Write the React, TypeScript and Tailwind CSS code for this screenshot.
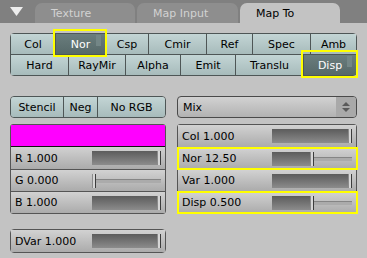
import React from "react";

type Btn = { label: string; w: string; active?: boolean; mark?: boolean };

const row1: Btn[] = [
    { label: "Col", w: "w-[44px]" },
    { label: "Nor", w: "w-[50px]", active: true, mark: true },
    { label: "Csp", w: "w-[43px]" },
    { label: "Cmir", w: "w-[58px]" },
    { label: "Ref", w: "w-[46px]" },
    { label: "Spec", w: "w-[58px]" },
    { label: "Amb", w: "flex-1" },
];

const row2: Btn[] = [
    { label: "Hard", w: "w-[57px]" },
    { label: "RayMir", w: "w-[57px]" },
    { label: "Alpha", w: "w-[55px]" },
    { label: "Emit", w: "w-[55px]" },
    { label: "Translu", w: "w-[68px]" },
    { label: "Disp", w: "flex-1", active: true, mark: true },
];

// teal toggle button, one cell of a button block
const Toggle: React.FC<{ b: Btn; first: boolean }> = ({ b, first }) => (
    <div
        className={`relative flex items-center justify-center h-full ${b.w} ${first ? "" : "border-l border-[#4e5656]"} ${
            b.active
                ? "bg-gradient-to-b from-[#6a7d7d] to-[#566969] text-white"
                : "bg-gradient-to-b from-[#c3d5d5] to-[#a7bbbb] text-black"
        }`}
    >
        {b.label}
        {b.active && <span className="absolute right-[4px] top-[1px] h-[11px] w-[5px] bg-[#738686]" />}
        {b.mark && (
            <span className="absolute z-10 -left-[3px] -right-[2px] -top-[5px] -bottom-[3px] border-2 border-[#ffff00]" />
        )}
    </div>
);

type Num = { label: string; frac: number; mark?: boolean };

// Blender number slider: label on the left, bar on the right
const Slider: React.FC<{ n: Num; top?: boolean }> = ({ n, top }) => (
    <div
        className={`relative flex items-center h-[22px] pl-[4px] pr-[4px] bg-gradient-to-b from-[#d2d2d2] to-[#ababab] ${
            top ? "" : "border-t border-[#555]"
        }`}
    >
        <span className="flex-1">{n.label}</span>
        <div className="flex items-center w-[47%] h-[14px]">
            <div
                className="h-full bg-gradient-to-b from-[#5c5c5c] to-[#8c8c8c]"
                style={{ flex: `0 0 calc((100% - 4px) * ${n.frac})` }}
            />
            <div className="h-full w-[4px] bg-[#d6d6d6] border-l border-[#8a8a8a] border-r border-r-[#3c3c3c]" />
            {n.frac < 1 && <div className="flex-1 h-[4px] bg-[#ababab] border-t border-[#858585]" />}
        </div>
        {n.mark && (
            <span className="absolute z-10 -left-[1px] -right-[2px] -top-[1px] -bottom-[1px] border-2 border-[#ffff00]" />
        )}
    </div>
);

const tabs = [
    { label: "Texture", active: false, w: "w-[100px]" },
    { label: "Map Input", active: false, w: "w-[101px]" },
    { label: "Map To", active: true, w: "w-[100px]" },
];

export default function App() {
    return (
        <div className="w-[367px] h-[258px] bg-[#c3c3c3] font-['DejaVu_Sans',sans-serif] text-[11px] leading-none text-black overflow-hidden">
            {/* tab header */}
            <div className="flex items-end h-[23px] bg-[#808080]">
                <svg width="13" height="10" viewBox="0 0 13 10" className="ml-[10px] mr-[12px] mb-[6px]">
                    <path d="M0 0 H13 L6.5 9 Z" fill="#ededed" />
                </svg>
                <div className="flex items-end gap-[2px]">
                    {tabs.map(t => (
                        <div
                            key={t.label}
                            className={`flex items-center h-[20px] pl-[16px] rounded-t-[7px] text-[11px] ${t.w} ${
                                t.active ? "bg-[#c3c3c3] text-black" : "bg-[#8e8e8e] text-[#d2d2d2]"
                            }`}
                        >
                            {t.label}
                        </div>
                    ))}
                </div>
            </div>

            {/* channel toggles */}
            <div className="ml-[10px] mt-[10px] w-[347px] border border-[#4e5656] rounded-[4px]">
                <div className="flex h-[20px]">
                    {row1.map((b, i) => (
                        <Toggle key={b.label} b={b} first={i === 0} />
                    ))}
                </div>
                <div className="flex h-[21px] border-t border-[#4e5656]">
                    {row2.map((b, i) => (
                        <Toggle key={b.label} b={b} first={i === 0} />
                    ))}
                </div>
            </div>

            <div className="flex gap-[11px] ml-[10px] mt-[20px]">
                {/* left column */}
                <div className="w-[156px] flex flex-col">
                    <div className="flex h-[22px] border border-[#4e5656] rounded-[4px] overflow-hidden">
                        <Toggle b={{ label: "Stencil", w: "w-[52px]" }} first />
                        <Toggle b={{ label: "Neg", w: "w-[34px]" }} first={false} />
                        <Toggle b={{ label: "No RGB", w: "flex-1" }} first={false} />
                    </div>
                    <div className="mt-[6px] border border-[#555] rounded-[3px]">
                        <div className="h-[22px] bg-[#ff00ff] border-b border-[#111]" />
                        <Slider n={{ label: "R 1.000", frac: 1 }} top />
                        <Slider n={{ label: "G 0.000", frac: 0 }} />
                        <Slider n={{ label: "B 1.000", frac: 1 }} />
                    </div>
                    <div className="mt-[15px] border border-[#555] rounded-[4px]">
                        <Slider n={{ label: "DVar 1.000", frac: 1 }} top />
                    </div>
                </div>

                {/* right column */}
                <div className="w-[180px] flex flex-col">
                    <div className="flex items-center h-[22px] border border-[#4a4a4a] rounded-[4px] bg-gradient-to-b from-[#d2d2d2] to-[#b2b2b2] overflow-hidden">
                        <span className="flex-1 pl-[5px]">Mix</span>
                        <div className="flex items-center justify-center w-[20px] h-full bg-[#a9a9a9]">
                            <svg width="8" height="10" viewBox="0 0 8 10">
                                <path d="M4 0 L8 4 H0 Z M4 10 L8 6 H0 Z" fill="#5a5a5a" />
                            </svg>
                        </div>
                    </div>
                    <div className="mt-[6px] border border-[#555] rounded-[3px]">
                        <Slider n={{ label: "Col 1.000", frac: 1 }} top />
                        <Slider n={{ label: "Nor 12.50", frac: 0.5, mark: true }} />
                        <Slider n={{ label: "Var 1.000", frac: 1 }} />
                        <Slider n={{ label: "Disp 0.500", frac: 0.5, mark: true }} />
                    </div>
                </div>
            </div>
        </div>
    );
}
